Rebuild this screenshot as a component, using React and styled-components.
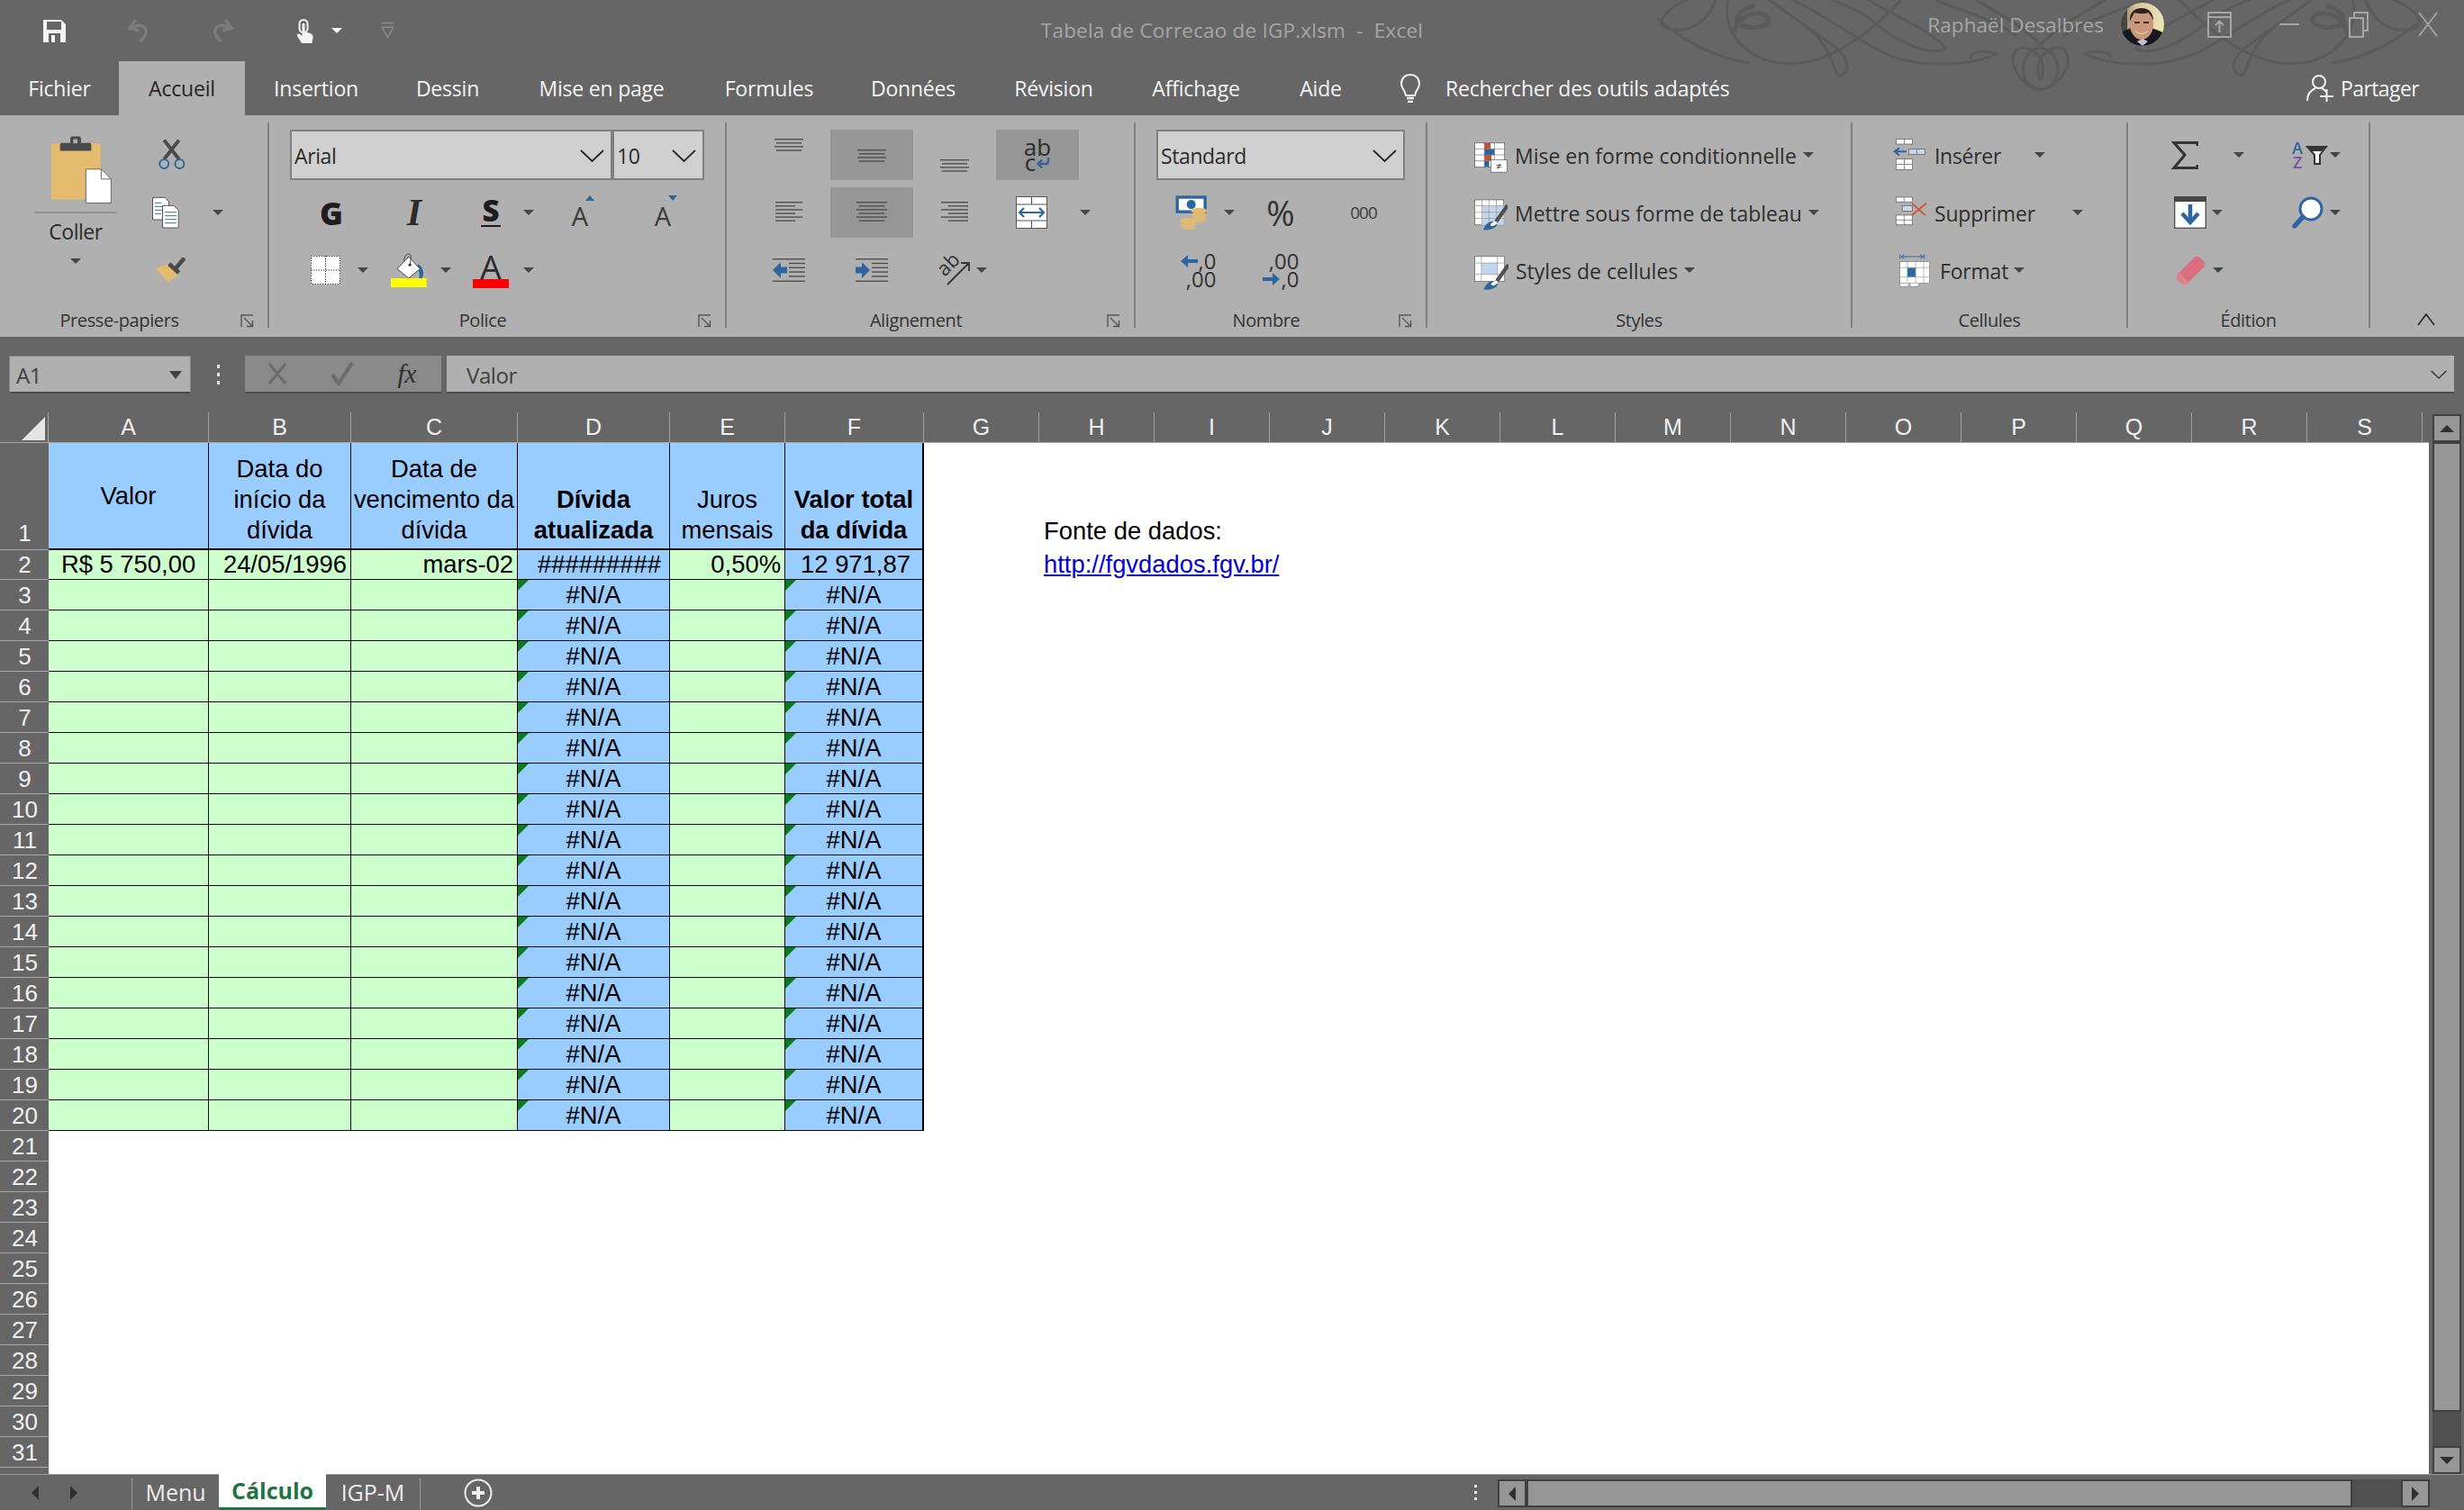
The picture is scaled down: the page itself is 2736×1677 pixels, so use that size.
import React from "react";
import styled, { createGlobalStyle } from "styled-components";

const UI = `"Open Sans", "Noto Sans", sans-serif`;
const ARIAL = `"Liberation Sans", Arial, sans-serif`;
const BLUE = "#2c66a0";
const AMBER = "#e5bc6d";
const INK = "#2b2b2b";

const Global = createGlobalStyle`
  html, body { margin: 0; padding: 0; background: #666; }
  * { box-sizing: border-box; }
`;

const Window = styled.div`
  width: 2736px; height: 1677px; overflow: hidden; display: flex; flex-direction: column;
  background: #666; font-family: ${UI}; color: ${INK}; position: relative;
`;

/* ---------- title bar ---------- */
const Flourish = styled.svg`
  position: absolute; left: 1840px; top: 0; width: 896px; height: 128px; pointer-events: none;
`;
const TitleBar = styled.header`
  height: 68px; display: grid; grid-template-columns: 1fr auto 1fr; align-items: center; position: relative;
`;
const Quick = styled.div`display: flex; align-items: center; padding-left: 13px;`;
const QuickSlot = styled.div`
  width: ${p => p.$w}px; display: flex; align-items: center; justify-content: ${p => p.$start ? "flex-start" : "center"};
  padding-left: ${p => p.$pl || 0}px;
`;
const DocTitle = styled.div`font-size: 22.5px; color: #a6a6a6; white-space: pre; letter-spacing: 0.2px; margin-top: -2px;`;
const Account = styled.div`display: flex; justify-content: flex-end; align-items: center; padding: 0 2px 14px 0;`;
const UserName = styled.div`font-size: 22.5px; color: #a6a6a6; margin-right: 19px; letter-spacing: 0.05px;`;
const Avatar = styled.svg`margin-right: 23px; display: block;`;
const WinButton = styled.div`width: 77px; display: flex; justify-content: center; align-items: center;`;

/* ---------- tabs ---------- */
const TabBar = styled.nav`height: 60px; display: flex; align-items: stretch; position: relative;`;
const Tab = styled.div`
  width: ${p => p.$w}px; display: flex; align-items: center; justify-content: center;
  font-size: 23px; letter-spacing: -0.2px; padding-bottom: 0;
  color: ${p => p.$on ? "#262626" : "#f4f4f4"}; background: ${p => p.$on ? "#b0b0b0" : "transparent"};
`;
const Bulb = styled.svg`margin: 0 28px 0 30px; align-self: center;`;
const SearchHint = styled.div`font-size: 23px; letter-spacing: -0.24px; color: #f4f4f4; align-self: center; padding-bottom: 1px;`;
const Share = styled.div`
  margin-left: auto; padding-right: 50px; display: flex; align-items: center; gap: 5px;
  font-size: 23px; letter-spacing: -0.6px; color: #f4f4f4;
`;

/* ---------- ribbon ---------- */
const Ribbon = styled.section`height: 246px; background: #b0b0b0; display: flex;`;
const Sep = styled.div`width: 2px; height: 228px; margin-top: 8px; background: #7f7f7f; flex: none;`;
const Group = styled.div`
  width: ${p => p.$w}px; flex: none; padding-top: 16px; display: flex; flex-direction: column;
`;
const GroupBody = styled.div`height: 184px; display: flex;`;
const GroupFoot = styled.div`
  margin-top: 14px; height: 28px; display: grid; align-items: center;
  grid-template-columns: ${p => p.$launcher ? "1fr 32px" : "1fr"};
`;
const GroupLabel = styled.div`font-size: 20px; letter-spacing: -0.4px; color: #333; text-align: center; line-height: 28px;`;
const Rows = styled.div`
  display: grid; padding-left: ${p => p.$pl || 0}px;
  grid-template-columns: ${p => p.$cols};
  grid-template-rows: repeat(3, 56px); row-gap: 8px;
`;
const Tool = styled.div`
  height: 56px; display: flex; align-items: center; padding-left: ${p => p.$pl || 0}px;
  background: ${p => p.$on ? "#969696" : "transparent"};
`;
const IconBox = styled.div`
  width: ${p => p.$w}px; height: 56px; flex: none; display: flex; align-items: center; justify-content: center;
`;
const Caret = styled.span`
  width: 0; height: 0; flex: none; display: block;
  border-left: 6px solid transparent; border-right: 6px solid transparent;
  border-top: 6px solid ${p => p.$c || "#454545"};
  margin-left: ${p => p.$ml || 0}px;
`;
const NameCaret = styled(Caret)`
  border-left-width: 7px; border-right-width: 7px; border-top-width: 9px; margin-right: 2px;
`;
const Paste = styled.div`
  width: 144px; margin-left: 12px; display: flex; flex-direction: column; align-items: center; height: 184px;
`;
const PasteIcon = styled.svg`margin: 6px 0 0 12px; display: block;`;
const PasteRule = styled.div`width: 92px; height: 2px; background: #909090; margin-top: 8px;`;
const PasteLabel = styled.div`font-size: 23px; letter-spacing: -0.5px; line-height: 30px; margin-top: 5px; color: ${INK};`;
const PasteCaret = styled(Caret)`margin-top: 15px;`;
const ToolColumn = styled.div`display: grid; grid-template-rows: repeat(3, 56px); row-gap: 8px;`;

const Combo = styled.div`
  grid-column: ${p => p.$span}; height: 56px; display: flex; border: 2px solid #7f7f7f; background: #d0d0d0;
`;
const ComboPart = styled.div`
  width: ${p => p.$w || "auto"}; flex: ${p => p.$w ? "none" : "1"}; display: flex; align-items: center; justify-content: space-between;
  padding: 2px 7px 0 3px; font-size: 23px; letter-spacing: -0.4px; color: ${INK};
  & + & { border-left: 4px solid #7f7f7f; }
`;
const GlyphBold = styled.span`font-size: 35px; font-weight: 800; color: #1d1d1d; line-height: 1;`;
const GlyphItalic = styled.span`font-family: "Liberation Serif", serif; font-style: italic; font-weight: 700; font-size: 42px; color: #2a2a2a; line-height: 1;`;
const GlyphUnder = styled(GlyphBold)`
  border-bottom: 2px solid #1d1d1d; line-height: 27px; height: 32px; font-size: 33px; padding: 0 1px;
`;
const GrowA = styled.span`
  position: relative; font-size: 29px; color: #3a3a3a; line-height: 1; padding-top: 6px;
  &::after {
    content: ""; position: absolute; top: -2px; left: 15px; width: 0; height: 0;
    border-left: 5px solid transparent; border-right: 5px solid transparent;
    ${p => p.$down ? `border-top: 6px solid ${BLUE};` : `border-bottom: 6px solid ${BLUE};`}
  }
`;
const ColorStack = styled.div`display: flex; flex-direction: column; align-items: center;`;
const ColorA = styled.span`font-size: 37px; line-height: 29px; height: 29px; color: #2a2a2a;`;
const ColorBar = styled.span`width: 40px; height: 10px; background: #f00; display: block;`;
const WrapMark = styled.div`
  display: flex; flex-direction: column; align-items: center; font-size: 26px; line-height: 17px; color: ${INK}; font-weight: 400;
`;
const WrapLine = styled.span`display: flex; align-items: center; gap: 1px;`;
const Percent = styled.span`font-size: 38px; color: #333; line-height: 1;`;
const Thousand = styled.span`font-size: 19px; letter-spacing: -1px; color: #3c3c3c;`;
const Decimal = styled.div`
  display: flex; flex-direction: column; align-items: flex-end; font-size: 24px; line-height: 20px; color: #333;
`;
const DecLine = styled.span`display: flex; align-items: center; gap: 1px;`;

const StyleList = styled.div`display: flex; flex-direction: column; gap: 8px; padding-left: ${p => p.$pl}px;`;
const StyleItem = styled.div`
  height: 56px; display: flex; align-items: center; padding-left: ${p => p.$pl || 0}px;
`;
const ItemIcon = styled.svg`display: block; flex: none; margin-right: ${p => p.$mr}px; margin-top: ${p => p.$mt || 0}px;`;
const ItemText = styled.span`
  font-size: 23px; letter-spacing: ${p => p.$ls ?? 0}px; color: #2e2e2e; white-space: nowrap; padding-top: 2px;
`;
const Collapse = styled.div`flex: 1; align-self: flex-end; padding: 0 0 7px 52px;`;

/* ---------- formula bar ---------- */
const FormulaBar = styled.div`height: 84px; padding: 21px 11px 0 10px; display: flex; align-items: flex-start;`;
const NameBox = styled.div`
  width: 202px; height: 42px; background: #b0b0b0; border: 1px solid #858585; border-bottom: 2px solid #4c4c4c;
  display: flex; align-items: center; justify-content: space-between; padding: 2px 7px 0; font-size: 24px; letter-spacing: -0.4px; color: #404040;
`;
const Dots = styled.div`
  width: 60px; height: 42px; display: flex; flex-direction: column; align-items: center; justify-content: center; gap: 5px;
  & span { width: 3px; height: 4px; background: #e6e6e6; display: block; }
`;
const FxBox = styled.div`
  width: 218px; height: 42px; background: #8a8a8a; border-bottom: 2px solid #4c4c4c; display: flex; align-items: center;
`;
const FxSlot = styled.div`width: 72px; display: flex; justify-content: center; align-items: center; margin-left: ${p => p.$ml || 0}px;`;
const Fx = styled.span`font-family: "Liberation Serif", serif; font-style: italic; font-size: 29px; color: #2e2e2e;`;
const Formula = styled.div`
  flex: 1; margin-left: 6px; height: 42px; background: #b0b0b0; border-bottom: 2px solid #4c4c4c; display: flex; align-items: center;
  justify-content: space-between; padding: 2px 8px 0 22px; font-size: 24px; letter-spacing: -0.4px; color: #404040;
`;

/* ---------- sheet ---------- */
const SheetArea = styled.div`height: 1179px; display: flex;`;
const Sheet = styled.div`width: 2697px; flex: none; background: #fff; overflow: hidden;`;
const ColumnHeads = styled.div`height: 33px; display: flex; background: #666; box-sizing: content-box; border-bottom: 1px solid #a8a8a8;`;
const Corner = styled.div`width: 54px; flex: none; display: flex; align-items: flex-end; justify-content: flex-end; padding: 0 3px 2px 0; border-right: 1px solid #a8a8a8;`;
const ColumnHead = styled.div`
  width: ${p => p.$w}px; flex: none; display: flex; align-items: center; justify-content: center;
  font-family: ${ARIAL}; font-size: 25px; color: #f0f0f0; border-right: 1px solid #a0a0a0;
`;
const SheetRow = styled.div`
  height: ${p => p.$h}px; display: grid; grid-template-columns: 54px 178px 158px 185px 169px 128px 154px 128px 1fr;
  grid-template-rows: ${p => p.$h}px;
  font-family: ${ARIAL}; font-size: 27.4px; color: #000;
`;
const RowHead = styled.div`
  background: #666; color: #f0f0f0; font-size: 26px; display: flex; justify-content: center; align-items: ${p => p.$end ? "flex-end" : "center"};
  border-bottom: 1px solid #a8a8a8; line-height: 32px; padding-left: 1px; padding-bottom: ${p => p.$end ? 2 : 0}px;
`;
const Cell = styled.div`
  position: relative; display: flex; white-space: nowrap; text-align: center; line-height: ${p => p.$lh || 32}px;
  background: ${p => p.$bg}; font-weight: ${p => p.$bold ? 700 : 400};
  justify-content: ${p => p.$right ? "flex-end" : "center"}; align-items: ${p => p.$v || "center"};
  padding-right: ${p => p.$right ? 4 : 0}px; padding-left: ${p => p.$pl || 0}px;
  padding-bottom: ${p => p.$v === "flex-end" ? 3 : 0}px;
  border-right: ${p => p.$last ? 2 : 1}px solid #000;
  border-bottom: ${p => p.$thick ? 2 : 1}px solid #000;
  ${p => p.$err && `&::before {
    content: ""; position: absolute; left: 0; top: 0; width: 0; height: 0;
    border-top: 12px solid #0c7a1e; border-right: 12px solid transparent;
  }`}
`;
const Free = styled.div`
  white-space: nowrap; padding-left: 5px; display: flex; align-items: ${p => p.$v || "center"}; line-height: 32px;
  padding-bottom: ${p => p.$v === "flex-end" ? 5 : 2}px;
`;
const SheetLink = styled.a`color: #0000d6; text-decoration: underline;`;

const VScroll = styled.div`width: 39px; padding: 2px 4px 0; display: flex; flex-direction: column; background: #666;`;
const ScrollBtn = styled.div`
  width: 32px; height: 31px; flex: none; background: #969696; border: 2px solid #404040; display: flex; align-items: center; justify-content: center;
`;
const VThumb = styled.div`width: 32px; flex: 1; background: #969696; border: 2px solid #404040;`;
const VTrack = styled.div`width: 32px; height: 38px; flex: none; background: #505050;`;
const Arrow = styled.span`
  width: 0; height: 0; display: block;
  ${p => ({
    up: "border-left:8px solid transparent;border-right:8px solid transparent;border-bottom:8px solid #303030;",
    down: "border-left:8px solid transparent;border-right:8px solid transparent;border-top:8px solid #303030;",
    left: "border-top:8px solid transparent;border-bottom:8px solid transparent;border-right:8px solid #303030;",
    right: "border-top:8px solid transparent;border-bottom:8px solid transparent;border-left:8px solid #303030;",
  }[p.$d])}
`;

/* ---------- bottom bar ---------- */
const BottomBar = styled.footer`height: 40px; display: flex; align-items: stretch; border-top: 1px solid #9a9a9a; background: #666;`;
const NavSlot = styled.div`width: 43px; display: flex; align-items: center; justify-content: center; margin-left: ${p => p.$ml || 0}px;`;
const SheetTabs = styled.div`display: flex; margin-left: 43px; margin-top: 3px; border-left: 1px solid #9a9a9a; border-right: 1px solid #9a9a9a;`;
const SheetTab = styled.div`
  width: ${p => p.$w}px; display: flex; align-items: center; justify-content: center; font-size: 25px; letter-spacing: 0;
  margin-top: ${p => p.$on ? -4 : 0}px; padding-bottom: ${p => p.$on ? 2 : 4}px;
  color: ${p => p.$on ? "#217346" : "#ededed"}; font-weight: ${p => p.$on ? 700 : 400};
  background: ${p => p.$on ? "#fff" : "transparent"};
  border-bottom: ${p => p.$on ? "3px solid #217346" : "none"};
`;
const AddSheet = styled.svg`margin: 4px 0 0 48px; display: block;`;
const SideDots = styled.div`
  margin-left: auto; width: 60px; display: flex; flex-direction: column; align-items: center; justify-content: center; gap: 4px; padding-left: 10px;
  & span { width: 3px; height: 3px; background: #e6e6e6; display: block; }
`;
const HScroll = styled.div`width: 1035px; margin: 5px 38px 3px 0; display: flex;`;
const HBtn = styled(ScrollBtn)`height: 31px;`;
const HThumb = styled.div`flex: 1; background: #969696; border: 2px solid #404040;`;
const HTrack = styled.div`width: 54px; background: #505050; flex: none;`;

/* ---------- small drawings ---------- */
const Save = () => (
  <svg width="25" height="25" viewBox="0 0 25 25"><path d="M0 0h20l5 5v20H0z" fill="#f4f4f4" /><rect x="4" y="2" width="16" height="9" fill="#666" /><rect x="6" y="15" width="13" height="10" fill="#666" /><rect x="9" y="17" width="4" height="8" fill="#f4f4f4" /></svg>
);
const Undo = ({ flip }) => (
  <svg width="27" height="28" viewBox="0 0 27 28" style={flip ? { transform: "scaleX(-1)" } : undefined}><path d="M6 12 C14 5 24 9 22 17 C21 21 18 24 15 26" fill="none" stroke="#7c7c7c" strokeWidth="3.5" /><path d="M11 2 L4 11 L14 14" fill="none" stroke="#7c7c7c" strokeWidth="3.5" /></svg>
);
const Touch = () => (
  <svg width="21" height="27" viewBox="0 0 21 27"><rect x="3.5" y="1" width="9" height="14" rx="4.5" fill="none" stroke="#f4f4f4" strokeWidth="2" /><path d="M6.5 6a1.5 1.5 0 013 0v8l6 2c3 1 3 3 3 5l-1 6H6l-5-8c-1-2 1-3 3-2l2.5 2z" fill="#f4f4f4" /></svg>
);
const Customize = () => (
  <svg width="16" height="20" viewBox="0 0 16 20"><path d="M1 1h14" stroke="#8d8d8d" strokeWidth="1.6" /><path d="M1.5 6h13L8 18z" fill="none" stroke="#8d8d8d" strokeWidth="1.5" /></svg>
);
const Flourishes = () => {
  const half = (
    <g fill="none" stroke="#5b5b5b" strokeWidth="3">
      <path vectorEffect="non-scaling-stroke" d="M610 195 C605 170 640 165 660 180 C600 225 500 225 440 175 C370 115 320 40 250 -10" />
      <path vectorEffect="non-scaling-stroke" d="M140 -10 C120 90 170 215 260 212 C340 210 420 100 480 -10" />
      <path vectorEffect="non-scaling-stroke" d="M290 90 C340 150 345 250 352 250 C378 250 375 190 340 150 C300 100 250 40 210 -10" />
      <path vectorEffect="non-scaling-stroke" strokeWidth="5" d="M150 110 C150 60 200 20 215 60 C225 85 190 100 165 85 C145 70 160 30 190 20" />
      <path vectorEffect="non-scaling-stroke" d="M70 -10 C0 40 -10 100 40 100 C85 100 110 30 115 -10" />
      <path vectorEffect="non-scaling-stroke" d="M0 60 C40 120 100 190 180 210" />
      <path vectorEffect="non-scaling-stroke" d="M400 -10 C470 60 540 110 560 160 C540 190 470 150 420 70 C390 30 350 10 330 -10" />
      <path vectorEffect="non-scaling-stroke" d="M745 160 C700 165 700 295 745 297 C780 298 815 200 790 165 C770 140 725 195 745 270" />
      <path vectorEffect="non-scaling-stroke" d="M620 0 C680 60 720 100 745 150 C770 100 810 60 870 0" />
      <path vectorEffect="non-scaling-stroke" d="M540 0 C600 40 660 70 700 120" />
    </g>
  );
  return (
    <Flourish viewBox="0 0 1568 384" preserveAspectRatio="none">
      {half}
      <g transform="translate(1490 0) scale(-1 1)">{half}</g>
    </Flourish>
  );
};
const Face = () => (
  <Avatar width="48" height="48" viewBox="0 0 48 48">
    <defs>
      <clipPath id="faceclip"><circle cx="24" cy="24" r="24" /></clipPath>
      <linearGradient id="wall" x1="0" x2="1" y1="0" y2="0"><stop offset="0" stopColor="#8a7557" /><stop offset=".35" stopColor="#d7c6a0" /><stop offset="1" stopColor="#efe2b8" /></linearGradient>
    </defs>
    <g clipPath="url(#faceclip)">
      <rect width="48" height="48" fill="url(#wall)" />
      <rect x="0" y="0" width="7" height="48" fill="#4a463f" />
      <path d="M0 48V34c6-5 12-6 16-6h16c6 1 12 3 16 7v13z" fill="#16181f" />
      <ellipse cx="23" cy="24" rx="13" ry="17" fill="#c9987a" />
      <path d="M10 21c-1-11 6-15 13-15s13 4 13 14c-2-5-4-8-6-9-5 2-12 1-15 0-1 2-3 5-5 10z" fill="#2b211c" />
      <rect x="15" y="21" width="6" height="2" fill="#3a2a20" />
      <rect x="25" y="21" width="6" height="2" fill="#3a2a20" />
      <path d="M16 31c4 4 10 4 14 0-2 5-12 5-14 0z" fill="#f4eee6" />
      <path d="M18 43l6-3 6 3-6 5z" fill="#b9c4d4" />
    </g>
  </Avatar>
);
const RibbonOpts = () => (
  <svg width="27" height="29" viewBox="0 0 27 29" fill="none" stroke="#a6a6a6" strokeWidth="2"><rect x="1" y="1" width="25" height="27" /><path d="M1 6h25M13.5 23V11M9 15l4.5-4.5L18 15" /></svg>
);
const MinIco = () => <svg width="22" height="3"><rect width="22" height="2" fill="#a6a6a6" /></svg>;
const RestoreIco = () => (
  <svg width="22" height="30" viewBox="0 0 22 30" fill="none" stroke="#a6a6a6" strokeWidth="2"><rect x="1" y="8" width="15" height="21" /><path d="M6 8V2h15v20h-5" /></svg>
);
const CloseIco = () => (
  <svg width="22" height="28" viewBox="0 0 22 28" fill="none" stroke="#a6a6a6" strokeWidth="1.8"><path d="M1 1l20 26M21 1L1 27" /></svg>
);
const BulbIco = () => (
  <Bulb width="22" height="32" viewBox="0 0 22 32" fill="none" stroke="#f4f4f4" strokeWidth="2"><path d="M11 1C5 1 1 5 1 11c0 5 4 7 5 13h10c1-6 5-8 5-13 0-6-4-10-10-10z" /><path d="M7 27h8M8 31h6" strokeWidth="2.4" /></Bulb>
);
const ShareIco = () => (
  <svg width="33" height="30" viewBox="0 0 33 30" fill="none" stroke="#f4f4f4" strokeWidth="2"><ellipse cx="14" cy="8" rx="7" ry="7" /><path d="M1 29c0-8 4-12 9-14M17 15c2 1 4 2 5 4" /><path d="M15 24h15M22.5 16v14" /></svg>
);
const ChevronDown = ({ w = 27 }) => (
  <svg width={w} height="14" viewBox="0 0 27 14" fill="none" stroke="#262626" strokeWidth="1.8"><path d="M1 1l12.5 12L26 1" /></svg>
);
const Launcher = () => (
  <svg width="15" height="15" viewBox="0 0 15 15" fill="none" stroke="#555" strokeWidth="1.4" style={{ marginLeft: 2 }}><path d="M1 14V1h13" /><path d="M4 4l9 9M7 13.5h6.5V7" /></svg>
);
const Clipboard = () => (
  <PasteIcon width="70" height="77" viewBox="105 30 210 230">
    <rect x="110" y="57" width="165" height="187" rx="8" fill={AMBER} />
    <path d="M140 82V62q0-6 6-6h28V42q0-8 8-8h20q8 0 8 8v14h28q6 0 6 6v20z" fill="#4a4a4a" />
    <rect x="184" y="43" width="14" height="14" fill="#b0b0b0" />
    <path d="M226 143H277L310 176V256H226z" fill="#fff" stroke="#666" strokeWidth="3" />
    <path d="M277 143V176H310" fill="none" stroke="#666" strokeWidth="3" />
  </PasteIcon>
);
const Scissors = () => (
  <svg width="37" height="38" viewBox="455 40 110 115" fill="none">
    <path d="M485 48L535 112M535 48L485 112" stroke="#4a4a4a" strokeWidth="12" />
    <circle cx="485" cy="128" r="15" stroke={BLUE} strokeWidth="6" />
    <circle cx="537" cy="128" r="15" stroke={BLUE} strokeWidth="6" />
  </svg>
);
const CopyIco = () => (
  <svg width="32" height="36" viewBox="445 232 95 108">
    <path d="M449 236H490L503 250V310H449z" fill="#fff" stroke="#555" strokeWidth="3" />
    <path d="M456 254H478M456 266H495M456 278H495M456 290H478" stroke="#3b6b94" strokeWidth="3" />
    <path d="M482 263H520L535 278V337H482z" fill="#fff" stroke="#555" strokeWidth="3" />
    <path d="M490 285H528M490 297H528M490 309H528M490 321H528" stroke="#3b6b94" strokeWidth="3" />
  </svg>
);
const BrushIco = () => (
  <svg width="35" height="30" viewBox="455 438 105 90">
    <path d="M460 478L508 460L540 495L503 523z" fill={AMBER} />
    <path d="M505 462L538 492" stroke="#4a4a4a" strokeWidth="14" />
    <path d="M528 476L552 448" stroke="#4a4a4a" strokeWidth="14" strokeLinecap="round" />
  </svg>
);
const BordersIco = () => (
  <svg width="33" height="32" viewBox="0 0 33 32">
    <rect width="33" height="32" fill="#fff" />
    <path d="M.5.5h32v31H.5zM16.5 0v32M0 16h33" fill="none" stroke="#333" strokeWidth="1" strokeDasharray="1.4 1.4" />
  </svg>
);
const FillIco = () => (
  <svg width="41" height="38" viewBox="1240 425 122 115">
    <path d="M1335 462q24 20 12 48h-10q3-25-8-40z" fill={BLUE} />
    <path d="M1302 437L1340 478L1302 510L1263 478z" fill="#fff" stroke="#444" strokeWidth="3" />
    <path d="M1286 452q2-24 18-24q10 2 2 36" fill="none" stroke="#444" strokeWidth="3" />
    <circle cx="1306" cy="465" r="5" fill="#444" />
    <rect x="1242" y="510" width="120" height="30" fill="#ff0" />
  </svg>
);
const Lines = ({ y, w, n = 4, gap = 4.1, align = "center", total = 56 }) => {
  const W = Math.max(...w);
  return (
    <svg width={W} height={total} viewBox={`0 0 ${W} ${total}`}>
      {Array.from({ length: n }).map((_, i) => {
        const lw = w[i % w.length];
        const x = align === "left" ? 0 : align === "right" ? W - lw : (W - lw) / 2;
        return <rect key={i} x={x} y={y + i * gap} width={lw} height="1.4" fill="#4f4f4f" />;
      })}
    </svg>
  );
};
const IndentIco = ({ right }) => (
  <svg width="36" height="26" viewBox="0 0 36 26">
    <rect y="0" width="36" height="1.4" fill="#4f4f4f" /><rect y="24.6" width="36" height="1.4" fill="#4f4f4f" />
    {[4.8, 9.6, 14.4, 19.2].map(y => <rect key={y} x="18" y={y} width="18" height="1.4" fill="#4f4f4f" />)}
    {right
      ? <path d="M0 9.5h7V4l9 9-9 9v-5.5H0z" fill={BLUE} />
      : <path d="M16 9.5H9V4l-9 9 9 9v-5.5h7z" fill={BLUE} />}
  </svg>
);
const WrapArrow = () => (
  <svg width="15" height="14" viewBox="0 0 15 14" fill="none" stroke={BLUE} strokeWidth="2.4"><path d="M13 1v4q0 3-3 3H2M6 3.5L1.5 8 6 12.5" /></svg>
);
const MergeIco = () => (
  <svg width="35" height="36" viewBox="0 0 35 36">
    <rect x=".5" y=".5" width="34" height="35" fill="#fff" stroke="#555" />
    <path d="M0 9h35M0 27h35M17.5 0v9M17.5 27v9" stroke="#555" />
    <path d="M4 18h27M9 13l-5 5 5 5M26 13l5 5-5 5" fill="none" stroke={BLUE} strokeWidth="2.2" />
  </svg>
);
const Orient = () => (
  <svg width="38" height="34" viewBox="0 0 38 34">
    <text fontFamily={UI} fontSize="22" fill="#333" transform="translate(8 25) rotate(-45)">ab</text>
    <path d="M11 33L35 9M26 9h9v9" fill="none" stroke="#333" strokeWidth="1.8" />
  </svg>
);
const Money = () => (
  <svg width="36" height="38" viewBox="1400 237 106 113">
    <rect x="1401" y="238" width="102" height="58" fill={BLUE} />
    <path d="M1411 248h82v38h-82z" fill="#fff" />
    <circle cx="1452" cy="267" r="15" fill={BLUE} />
    <g fill={AMBER}>
      <ellipse cx="1478" cy="288" rx="26" ry="10" /><ellipse cx="1478" cy="302" rx="26" ry="10" opacity=".85" /><ellipse cx="1478" cy="316" rx="26" ry="10" opacity=".75" />
      <ellipse cx="1443" cy="320" rx="26" ry="9" /><ellipse cx="1443" cy="332" rx="26" ry="9" opacity=".85" /><ellipse cx="1443" cy="343" rx="26" ry="7" opacity=".75" />
    </g>
  </svg>
);
const LeftArrow = () => <svg width="20" height="16" viewBox="0 0 20 16"><path d="M20 6H9V1L1 8l8 7v-5h11z" fill={BLUE} /></svg>;
const RightArrow = () => <svg width="20" height="16" viewBox="0 0 20 16"><path d="M0 6h11V1l8 7-8 7v-5H0z" fill={BLUE} /></svg>;
const CondIco = () => (
  <ItemIcon $mr={8} $mt={6} width="37" height="34" viewBox="50 54 112 102">
    <rect x="52" y="56" width="100" height="81" fill="#fff" stroke="#555" strokeWidth="2" />
    <rect x="84" y="56" width="21" height="20" fill="#c8512d" /><rect x="84" y="76" width="34" height="20" fill={BLUE} /><rect x="84" y="96" width="24" height="20" fill="#c8512d" /><rect x="84" y="116" width="16" height="20" fill={BLUE} />
    <path d="M52 76h100M52 96h100M52 116h100M84 56v81M118 56v81" stroke="#777" strokeWidth="2" />
    <rect x="106" y="113" width="54" height="41" fill="#fff" stroke="#555" strokeWidth="2" />
    <text x="133" y="146" fontSize="36" textAnchor="middle" fontFamily={UI} fill="#333">≠</text>
  </ItemIcon>
);
const BrushTip = ({ dy }) => (
  <g transform={`translate(0 ${dy})`}>
    <path d="M160 268L126 316" stroke="#505050" strokeWidth="13" strokeLinecap="round" />
    <path d="M80 347Q90 320 112 318L128 330Q115 350 80 347z" fill={BLUE} />
    <ellipse cx="116" cy="326" rx="12" ry="6" fill="#fff" transform="rotate(-30 116 326)" />
  </g>
);
const TableIco = () => (
  <ItemIcon $mr={8} $mt={4} width="37" height="35" viewBox="50 243 113 105">
    <rect x="52" y="245" width="98" height="85" fill="#fff" stroke="#555" strokeWidth="2" />
    <rect x="76" y="265" width="74" height="65" fill="#c3d7ec" />
    <path d="M52 265h98M52 287h98M52 308h98M76 245v85M100 245v85M125 245v85" stroke="#8f8f8f" strokeWidth="2" />
    <BrushTip dy={0} />
  </ItemIcon>
);
const CellStyleIco = () => (
  <ItemIcon $mr={8} $mt={6} width="38" height="38" viewBox="48 427 115 112">
    <rect x="50" y="428" width="100" height="84" fill="#fff" stroke="#555" strokeWidth="2" />
    <rect x="72" y="450" width="54" height="38" fill="#c3d7ec" />
    <path d="M50 450h100M50 488h100M72 428v84M126 428v84" stroke="#8f8f8f" strokeWidth="2" />
    <BrushTip dy={192} />
  </ItemIcon>
);
const Cells2 = ({ x, y, w, h, rows = 1, fill = "#fff" }) => (
  <g>
    <rect x={x} y={y} width={w} height={h} fill={fill} stroke="#555" strokeWidth="2" />
    <path d={`M${x + w / 2} ${y}v${h}` + (rows > 1 ? `M${x} ${y + h / 2}h${w}` : "")} stroke="#555" strokeWidth="2" />
  </g>
);
const InsertIco = () => (
  <ItemIcon $mr={10} width="36" height="36" viewBox="63 45 108 108">
    <Cells2 x={73} y={47} w={55} h={16} />
    <Cells2 x={115} y={80} w={55} h={17} fill="#c6d8ea" />
    <Cells2 x={73} y={113} w={55} h={35} rows={2} />
    <path d="M108 88H70M84 76L68 88l16 12" fill="none" stroke={BLUE} strokeWidth="6" />
  </ItemIcon>
);
const DeleteIco = () => (
  <ItemIcon $mr={8} width="38" height="36" viewBox="63 237 116 108">
    <Cells2 x={73} y={239} w={55} h={16} />
    <rect x="94" y="268" width="34" height="18" fill="#c6d8ea" stroke="#555" strokeWidth="2" />
    <Cells2 x={73} y={300} w={55} h={33} rows={2} />
    <path d="M127 260L172 300M176 260L127 300" stroke="#cd5a37" strokeWidth="6" />
  </ItemIcon>
);
const FormatIco = () => (
  <ItemIcon $mr={11} width="34" height="37" viewBox="86 425 103 112">
    <path d="M88 426v16M170 426v16M92 434H166M102 427l-10 7 10 7M156 427l10 7-10 7" fill="none" stroke={BLUE} strokeWidth="3" />
    <rect x="88" y="451" width="100" height="73" fill="#fff" stroke="#777" strokeWidth="2" />
    <rect x="113" y="471" width="28" height="32" fill={BLUE} />
    <path d="M88 471h100M88 503h100M113 451v73M141 451v73M168 451v73" stroke="#999" strokeWidth="2" />
    <path d="M88 524v11h26l6-11M122 524v11h26l6-11" fill="#fff" stroke="#777" strokeWidth="2" />
  </ItemIcon>
);
const SumIco = () => (
  <svg width="30" height="33" viewBox="0 0 30 33" fill="none" stroke="#333" strokeWidth="3"><path d="M29 6V2.5H3L15 16 3 30.5h26V27" /></svg>
);
const SortIco = () => (
  <svg width="40" height="34" viewBox="0 0 40 34">
    <text x="0" y="16" fontFamily={UI} fontSize="18" fontWeight="600" fill={BLUE}>A</text>
    <text x="1" y="32" fontFamily={UI} fontSize="18" fontWeight="600" fill="#7c4fa3">Z</text>
    <path d="M17 8h21l-7 9v10h-6V17z" fill="#fff" stroke="#333" strokeWidth="2" />
    <path d="M17 7h21l-5 6H22z" fill="#333" />
  </svg>
);
const FillDown = () => (
  <svg width="36" height="36" viewBox="0 0 36 36">
    <rect x=".7" y=".7" width="34.6" height="34.6" fill="#fff" stroke="#555" strokeWidth="1.4" />
    <rect width="36" height="6" fill="#454545" />
    <path d="M18 9v19M9 19l9 10 9-10" fill="none" stroke={BLUE} strokeWidth="4.5" />
  </svg>
);
const FindIco = () => (
  <svg width="36" height="36" viewBox="0 0 36 36">
    <circle cx="21" cy="14" r="12" fill="#fff" stroke={BLUE} strokeWidth="3" />
    <path d="M12 23L3 33" stroke={BLUE} strokeWidth="5.5" strokeLinecap="round" />
  </svg>
);
const Eraser = () => (
  <svg width="31" height="31" viewBox="0 0 31 31">
    <g transform="rotate(-45 15.5 15.5)"><rect x="-2" y="8" width="35" height="15" rx="3" fill="#dc6d82" /><rect x="-2" y="8" width="7" height="15" rx="2" fill="#e07f90" /></g>
  </svg>
);

/* ---------- data ---------- */
const columns = [["A", 178], ["B", 158], ["C", 185], ["D", 169], ["E", 128], ["F", 154],
  ...["G", "H", "I", "J", "K", "L", "M", "N", "O", "P", "Q", "R", "S"].map(c => [c, 128])];

const GREEN = "#ccffcc";
const SKY = "#99ccff";

const tabs = [["Fichier", 132], ["Accueil", 140, true], ["Insertion", 158], ["Dessin", 134], ["Mise en page", 208], ["Formules", 164], ["Données", 156], ["Révision", 156], ["Affichage", 160], ["Aide", 117]];

const Foot = ({ label, launcher }) => (
  <GroupFoot $launcher={launcher}><GroupLabel>{label}</GroupLabel>{launcher && <Launcher />}</GroupFoot>
);

export default function App() {
  return (
    <Window>
      <Global />
      <Flourishes />
      <TitleBar>
        <Quick>
          <QuickSlot $w={94}><Save /></QuickSlot>
          <QuickSlot $w={93}><Undo /></QuickSlot>
          <QuickSlot $w={94}><Undo flip /></QuickSlot>
          <QuickSlot $w={104} $start $pl={35}><Touch /><Caret $c="#f4f4f4" $ml={18} /></QuickSlot>
          <QuickSlot $w={40} $start $pl={25}><Customize /></QuickSlot>
        </Quick>
        <DocTitle>Tabela de Correcao de IGP.xlsm  -  Excel</DocTitle>
        <Account>
          <UserName>Raphaël Desalbres</UserName>
          <Face />
          <WinButton><RibbonOpts /></WinButton>
          <WinButton><MinIco /></WinButton>
          <WinButton><RestoreIco /></WinButton>
          <WinButton><CloseIco /></WinButton>
        </Account>
      </TitleBar>

      <TabBar>
        {tabs.map(([t, w, on]) => <Tab key={t} $w={w} $on={on}>{t}</Tab>)}
        <BulbIco />
        <SearchHint>Rechercher des outils adaptés</SearchHint>
        <Share><ShareIco />Partager</Share>
      </TabBar>

      <Ribbon>
        <Group $w={297}>
          <GroupBody>
            <Paste>
              <Clipboard />
              <PasteRule />
              <PasteLabel>Coller</PasteLabel>
              <PasteCaret />
            </Paste>
            <ToolColumn>
              <Tool><IconBox $w={68}><Scissors /></IconBox></Tool>
              <Tool><IconBox $w={56}><CopyIco /></IconBox><Caret $ml={24} /></Tool>
              <Tool><IconBox $w={64}><BrushIco /></IconBox></Tool>
            </ToolColumn>
          </GroupBody>
          <Foot label="Presse-papiers" launcher />
        </Group>
        <Sep />
        <Group $w={506}>
          <GroupBody>
            <Rows $pl={23} $cols="repeat(5, 92px)">
              <Combo $span="1 / 6">
                <ComboPart $w="354px">Arial<ChevronDown /></ComboPart>
                <ComboPart>10<ChevronDown /></ComboPart>
              </Combo>
              <Tool><IconBox $w={92}><GlyphBold>G</GlyphBold></IconBox></Tool>
              <Tool><IconBox $w={92}><GlyphItalic>I</GlyphItalic></IconBox></Tool>
              <Tool><IconBox $w={78}><GlyphUnder>S</GlyphUnder></IconBox><Caret $ml={-3} /></Tool>
              <Tool><IconBox $w={92}><GrowA>A</GrowA></IconBox></Tool>
              <Tool><IconBox $w={92}><GrowA $down>A</GrowA></IconBox></Tool>
              <Tool><IconBox $w={78}><BordersIco /></IconBox><Caret $ml={-3} /></Tool>
              <Tool><IconBox $w={78}><FillIco /></IconBox><Caret $ml={-3} /></Tool>
              <Tool><IconBox $w={78}><ColorStack><ColorA>A</ColorA><ColorBar /></ColorStack></IconBox><Caret $ml={-3} /></Tool>
            </Rows>
          </GroupBody>
          <Foot label="Police" launcher />
        </Group>
        <Sep />
        <Group $w={452}>
          <GroupBody>
            <Rows $pl={23} $cols="repeat(4, 92px)">
              <Tool><IconBox $w={92}><Lines y={10} w={[32, 28]} /></IconBox></Tool>
              <Tool $on><IconBox $w={92}><Lines y={22} w={[32, 28]} /></IconBox></Tool>
              <Tool><IconBox $w={92}><Lines y={33} w={[32, 28]} /></IconBox></Tool>
              <Tool $on><IconBox $w={92}>
                <WrapMark><span>ab</span><WrapLine>c<WrapArrow /></WrapLine></WrapMark>
              </IconBox></Tool>
              <Tool><IconBox $w={92}><Lines y={16} n={6} w={[30, 22]} align="left" /></IconBox></Tool>
              <Tool $on><IconBox $w={92}><Lines y={16} n={6} w={[34, 28]} /></IconBox></Tool>
              <Tool><IconBox $w={92}><Lines y={16} n={6} w={[30, 22]} align="right" /></IconBox></Tool>
              <Tool><IconBox $w={78}><MergeIco /></IconBox><Caret $ml={15} /></Tool>
              <Tool><IconBox $w={92}><IndentIco /></IconBox></Tool>
              <Tool><IconBox $w={92}><IndentIco right /></IconBox></Tool>
              <Tool $pl={11}><IconBox $w={70}><Orient /></IconBox><Caret $ml={-11} /></Tool>
            </Rows>
          </GroupBody>
          <Foot label="Alignement" launcher />
        </Group>
        <Sep />
        <Group $w={322}>
          <GroupBody>
            <Rows $pl={23} $cols="repeat(3, 92px)">
              <Combo $span="1 / 4"><ComboPart>Standard<ChevronDown /></ComboPart></Combo>
              <Tool><IconBox $w={78}><Money /></IconBox><Caret $ml={-3} /></Tool>
              <Tool><IconBox $w={92}><Percent>%</Percent></IconBox></Tool>
              <Tool><IconBox $w={92}><Thousand>000</Thousand></IconBox></Tool>
              <Tool><IconBox $w={92}><Decimal><DecLine><LeftArrow />,0</DecLine><span>,00</span></Decimal></IconBox></Tool>
              <Tool><IconBox $w={92}><Decimal><span>,00</span><DecLine><RightArrow />,0</DecLine></Decimal></IconBox></Tool>
            </Rows>
          </GroupBody>
          <Foot label="Nombre" launcher />
        </Group>
        <Sep />
        <Group $w={470}>
          <GroupBody>
            <StyleList $pl={52}>
              <StyleItem><CondIco /><ItemText>Mise en forme conditionnelle</ItemText><Caret $ml={7} /></StyleItem>
              <StyleItem><TableIco /><ItemText>Mettre sous forme de tableau</ItemText><Caret $ml={7} /></StyleItem>
              <StyleItem><CellStyleIco /><ItemText>Styles de cellules</ItemText><Caret $ml={7} /></StyleItem>
            </StyleList>
          </GroupBody>
          <Foot label="Styles" />
        </Group>
        <Sep />
        <Group $w={304}>
          <GroupBody>
            <StyleList $pl={45}>
              <StyleItem><InsertIco /><ItemText $ls={-0.3}>Insérer</ItemText><Caret $ml={37} /></StyleItem>
              <StyleItem><DeleteIco /><ItemText $ls={-0.2}>Supprimer</ItemText><Caret $ml={41} /></StyleItem>
              <StyleItem $pl={7}><FormatIco /><ItemText $ls={-0.2}>Format</ItemText><Caret $ml={6} /></StyleItem>
            </StyleList>
          </GroupBody>
          <Foot label="Cellules" />
        </Group>
        <Sep />
        <Group $w={267}>
          <GroupBody>
            <Rows $cols="137px 130px">
              <Tool $pl={48}><SumIco /><Caret $ml={39} /></Tool>
              <Tool $pl={45}><SortIco /><Caret $ml={2} /></Tool>
              <Tool $pl={51}><FillDown /><Caret $ml={6} /></Tool>
              <Tool $pl={45}><FindIco /><Caret $ml={6} /></Tool>
              <Tool $pl={54}><Eraser /><Caret $ml={9} /></Tool>
            </Rows>
          </GroupBody>
          <Foot label="Édition" />
        </Group>
        <Sep />
        <Collapse>
          <svg width="20" height="14" viewBox="0 0 20 14" fill="none" stroke="#262626" strokeWidth="1.6"><path d="M1 13L10 1l9 12" /></svg>
        </Collapse>
      </Ribbon>

      <FormulaBar>
        <NameBox>A1<NameCaret $c="#404040" /></NameBox>
        <Dots><span /><span /><span /></Dots>
        <FxBox>
          <FxSlot>
            <svg width="22" height="24" viewBox="0 0 22 24" fill="none" stroke="#6c6c6c" strokeWidth="3"><path d="M2 1l18 22M20 1L2 23" /></svg>
          </FxSlot>
          <FxSlot>
            <svg width="26" height="26" viewBox="0 0 26 26" fill="none" stroke="#6c6c6c" strokeWidth="4"><path d="M2 14l7 10L24 1" /></svg>
          </FxSlot>
          <FxSlot><Fx>fx</Fx></FxSlot>
        </FxBox>
        <Formula>Valor<ChevronDown w={18} /></Formula>
      </FormulaBar>

      <SheetArea>
        <Sheet>
          <ColumnHeads>
            <Corner><svg width="26" height="26"><path d="M26 0V26H0z" fill="#e4e4e4" /></svg></Corner>
            {columns.map(([c, w]) => <ColumnHead key={c} $w={w}>{c}</ColumnHead>)}
          </ColumnHeads>

          <SheetRow $h={119}>
            <RowHead $end>1</RowHead>
            <Cell $bg={SKY} $thick>Valor</Cell>
            <Cell $bg={SKY} $thick $lh={34} $v="flex-end"><span>Data do<br />início da<br />dívida</span></Cell>
            <Cell $bg={SKY} $thick $lh={34} $v="flex-end"><span>Data de<br />vencimento da<br />dívida</span></Cell>
            <Cell $bg={SKY} $thick $bold $lh={34} $v="flex-end"><span>Dívida<br />atualizada</span></Cell>
            <Cell $bg={SKY} $thick $lh={34} $v="flex-end"><span>Juros<br />mensais</span></Cell>
            <Cell $bg={SKY} $thick $last $bold $lh={34} $v="flex-end"><span>Valor total<br />da dívida</span></Cell>
            <span />
            <Free $v="flex-end">Fonte de dados:</Free>
          </SheetRow>
          <SheetRow $h={33}>
            <RowHead>2</RowHead>
            <Cell $bg={GREEN}>R$ 5 750,00</Cell>
            <Cell $bg={GREEN} $right>24/05/1996</Cell>
            <Cell $bg={GREEN} $right>mars-02</Cell>
            <Cell $bg={SKY} $pl={13}>#########</Cell>
            <Cell $bg={GREEN} $right>0,50%</Cell>
            <Cell $bg={SKY} $last $pl={4}>12 971,87</Cell>
            <span />
            <Free><SheetLink href="#">http://fgvdados.fgv.br/</SheetLink></Free>
          </SheetRow>
          {Array.from({ length: 18 }, (_, i) => i + 3).map(n => (
            <SheetRow key={n} $h={34}>
              <RowHead>{n}</RowHead>
              <Cell $bg={GREEN} />
              <Cell $bg={GREEN} />
              <Cell $bg={GREEN} />
              <Cell $bg={SKY} $err>#N/A</Cell>
              <Cell $bg={GREEN} />
              <Cell $bg={SKY} $err $last>#N/A</Cell>
            </SheetRow>
          ))}
          {Array.from({ length: 12 }, (_, i) => i + 21).map(n => (
            <SheetRow key={n} $h={34}><RowHead>{n}</RowHead></SheetRow>
          ))}
        </Sheet>
        <VScroll>
          <ScrollBtn><Arrow $d="up" /></ScrollBtn>
          <VThumb />
          <VTrack />
          <ScrollBtn><Arrow $d="down" /></ScrollBtn>
        </VScroll>
      </SheetArea>

      <BottomBar>
        <NavSlot $ml={17}><Arrow $d="left" /></NavSlot>
        <NavSlot><Arrow $d="right" /></NavSlot>
        <SheetTabs>
          <SheetTab $w={96}>Menu</SheetTab>
          <SheetTab $w={119} $on>Cálculo</SheetTab>
          <SheetTab $w={104}>IGP-M</SheetTab>
        </SheetTabs>
        <AddSheet width="32" height="32" viewBox="0 0 32 32" fill="none" stroke="#f0f0f0"><circle cx="16" cy="16" r="14.5" strokeWidth="2" /><path d="M16 9v14M9 16h14" strokeWidth="4" /></AddSheet>
        <SideDots><span /><span /><span /></SideDots>
        <HScroll>
          <HBtn><Arrow $d="left" /></HBtn>
          <HThumb />
          <HTrack />
          <HBtn><Arrow $d="right" /></HBtn>
        </HScroll>
      </BottomBar>
    </Window>
  );
}
